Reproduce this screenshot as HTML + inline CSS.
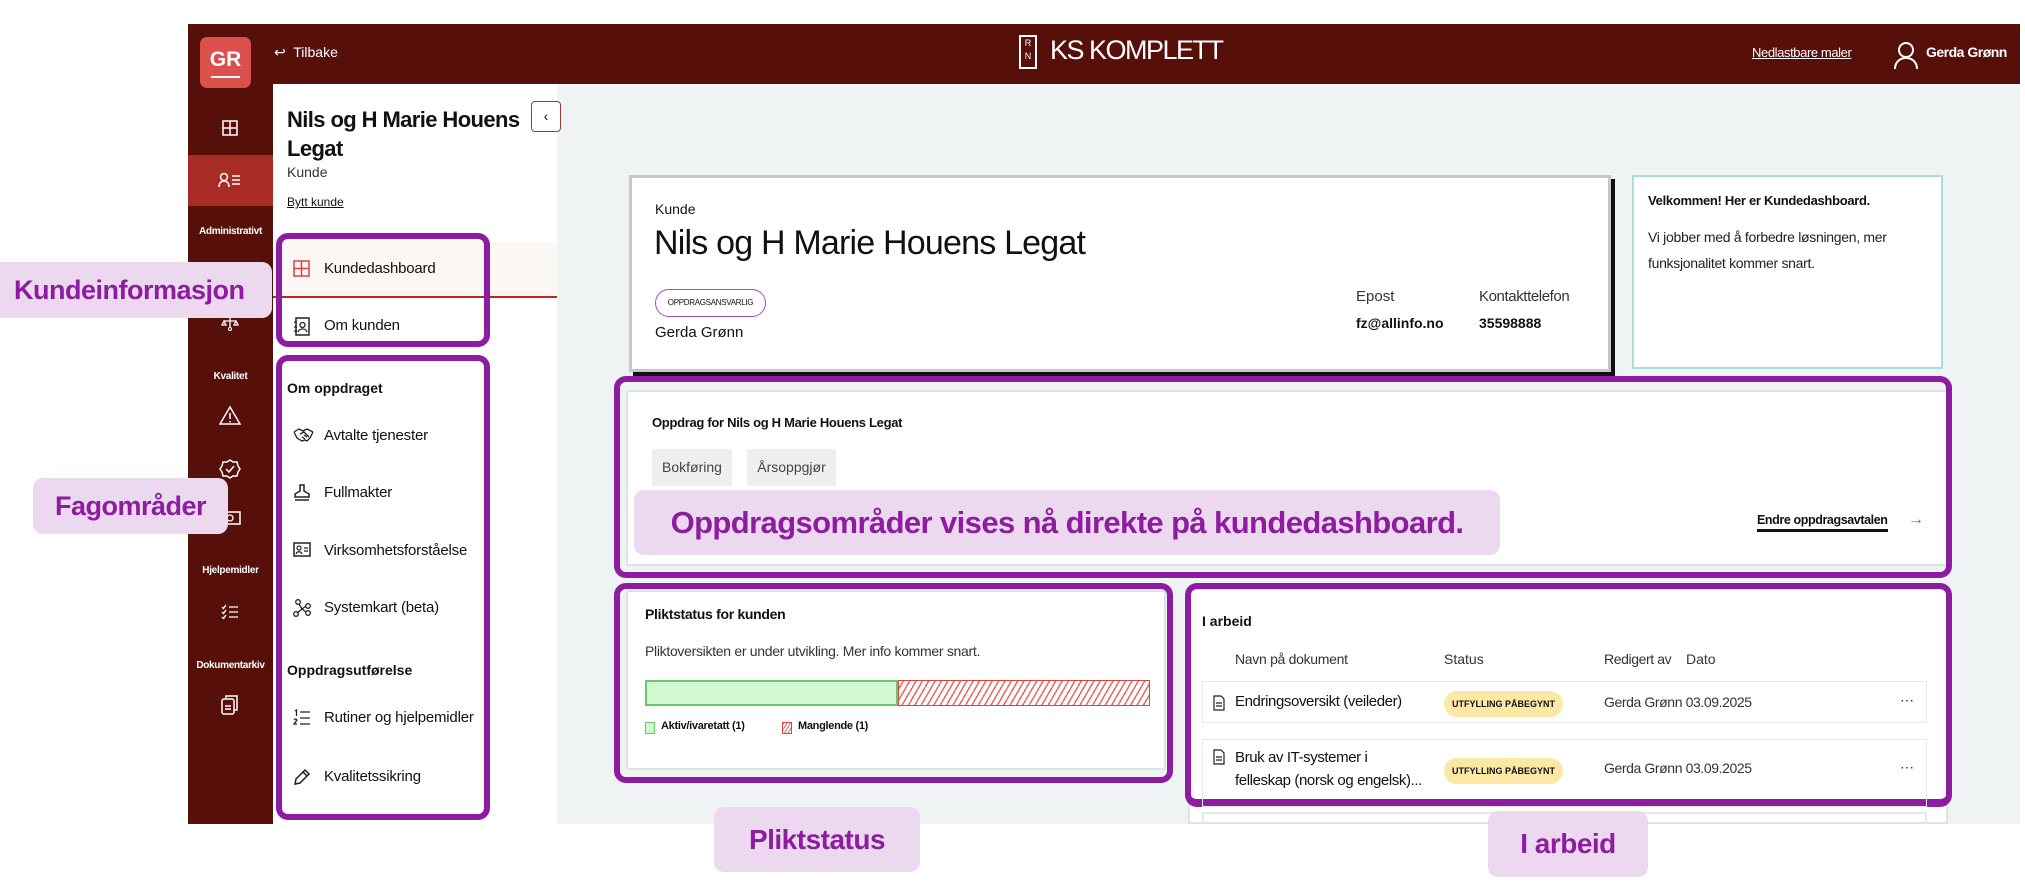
<!DOCTYPE html>
<html><head><meta charset="utf-8">
<style>
*{box-sizing:border-box;margin:0;padding:0}
body{width:2025px;height:888px;background:#fff;position:relative;overflow:hidden;font-family:"Liberation Sans",sans-serif;color:#111}
.a{position:absolute}
.rail{left:188px;top:24px;width:85px;height:800px;background:#560f09}
.top{left:188px;top:24px;width:1832px;height:60px;background:#560f09}
.main{left:557px;top:84px;width:1463px;height:740px;background:#eff3f3}
.panel{left:273px;top:84px;width:284px;height:740px;background:#fff}
.rl{color:#fff;font-size:10px;font-weight:bold;width:85px;text-align:center;left:188px;letter-spacing:-0.3px}
.ri{left:188px;width:85px;text-align:center;color:#fff}
.nav{left:294px;font-size:15px;color:#111;letter-spacing:-0.2px}
.ic{position:absolute;left:-1px;top:0}
.nav span{margin-left:30px}
.pbox{border:6px solid #8d1ca0;border-radius:12px}
.lab{background:#ecd9f0;color:#8d1ca0;font-family:"Liberation Sans",sans-serif;font-weight:bold;border-radius:10px;display:flex;align-items:center;justify-content:center}
.card{background:#fff}
.badge{background:#fbe8a5;border-radius:14px;font-size:9px;font-weight:bold;padding:0 8px;height:26px;line-height:26px}
</style></head><body>
<div class="a top"></div>
<div class="a rail"></div>
<div class="a main"></div>
<div class="a panel"></div>

<div class="a" style="left:200px;top:37px;width:51px;height:51px;background:#db4f4c;border-radius:7px;color:#fff;font-weight:bold;font-size:21px;text-align:center;line-height:46px">GR<div style="position:absolute;left:11px;top:39px;width:29px;height:2px;background:#fff"></div></div>
<div class="a" style="left:274px;top:44px;color:#fff;font-size:14px">&#8617;&nbsp; Tilbake</div>
<div class="a" style="left:1019px;top:35px;width:18px;height:34px;border:2px solid #fff;color:#fff;font-size:9px;text-align:center;line-height:13px">R<br>N</div>
<div class="a" style="left:1050px;top:35px;color:#fff;font-size:27px;letter-spacing:-1.5px;font-weight:300">KS KOMPLETT</div>
<div class="a" style="left:1752px;top:45px;color:#fff;font-size:13px;text-decoration:underline;letter-spacing:-0.4px">Nedlastbare maler</div>
<svg class="a" style="left:1893px;top:40px" width="26" height="30" viewBox="0 0 26 30"><circle cx="13" cy="10" r="7" fill="none" stroke="#fff" stroke-width="2"/><path d="M2 29c0-7 5-11 11-11s11 4 11 11" fill="none" stroke="#fff" stroke-width="2"/></svg>
<div class="a" style="left:1926px;top:44px;color:#fff;font-size:14px;font-weight:bold;letter-spacing:-0.5px">Gerda Grønn</div>

<div class="a" style="left:188px;top:155px;width:85px;height:51px;background:#a92b25"></div>
<svg class="a" style="left:222px;top:120px" width="16" height="16"><rect x="1" y="1" width="14" height="14" fill="none" stroke="#fff" stroke-width="1.5"/><path d="M8 1v14M1 8h14" stroke="#fff" stroke-width="1.5"/></svg>
<svg class="a" style="left:218px;top:172px" width="24" height="16"><circle cx="6" cy="5" r="3.5" fill="none" stroke="#fff" stroke-width="1.5"/><path d="M1 15c0-4 2-6 5-6s5 2 5 6M14 4h8M14 8h8M14 12h8" fill="none" stroke="#fff" stroke-width="1.5"/></svg>
<div class="a rl" style="top:226px">Administrativt</div>
<svg class="a" style="left:221px;top:315px" width="18" height="16"><path d="M9 1v5M3 6h12M3 6l-2 4h4zM15 6l-2 4h4zM9 6v7" fill="none" stroke="#fff" stroke-width="1.3"/><circle cx="9" cy="14" r="1.5" fill="none" stroke="#fff"/></svg>
<div class="a rl" style="top:371px">Kvalitet</div>
<svg class="a" style="left:219px;top:405px" width="22" height="20"><path d="M11 2L1 19h20z" fill="none" stroke="#fff" stroke-width="1.5"/><path d="M11 8v6M11 16v1.5" stroke="#fff" stroke-width="1.5"/></svg>
<svg class="a" style="left:219px;top:458px" width="22" height="22"><path d="M11 2l3 2 4 0 1 4 2 3-2 3-1 4-4 0-3 2-3-2-4 0-1-4-2-3 2-3 1-4 4 0z" fill="none" stroke="#fff" stroke-width="1.5"/><path d="M7 11l3 3 5-6" fill="none" stroke="#fff" stroke-width="1.5"/></svg>
<svg class="a" style="left:219px;top:511px" width="22" height="14"><rect x="1" y="1" width="20" height="12" fill="none" stroke="#fff" stroke-width="1.5"/><circle cx="11" cy="7" r="3" fill="none" stroke="#fff" stroke-width="1.3"/></svg>
<div class="a rl" style="top:565px">Hjelpemidler</div>
<svg class="a" style="left:221px;top:604px" width="18" height="16"><path d="M1 3l1.5 1.5L5 1M1 8l1.5 1.5L5 6M1 13l1.5 1.5L5 11M8 3h9M8 8h9M8 13h9" fill="none" stroke="#fff" stroke-width="1.3"/></svg>
<div class="a rl" style="top:660px">Dokumentarkiv</div>
<svg class="a" style="left:221px;top:694px" width="18" height="22"><rect x="1" y="5" width="12" height="15" rx="2" fill="none" stroke="#fff" stroke-width="1.5"/><path d="M5 4V2h11v14h-3M4 12h6M4 15h6" fill="none" stroke="#fff" stroke-width="1.5"/></svg>

<div class="a" style="left:287px;top:105px;font-size:22px;font-weight:bold;line-height:29px;width:270px;letter-spacing:-0.6px">Nils og H Marie Houens<br>Legat</div>
<div class="a" style="left:287px;top:164px;font-size:14px;color:#333">Kunde</div>
<div class="a" style="left:287px;top:195px;font-size:12px;text-decoration:underline">Bytt kunde</div>
<div class="a" style="left:531px;top:101px;width:30px;height:31px;border:1.5px solid #a03a35;border-radius:4px;background:#fff;text-align:center;line-height:28px;font-size:14px">&#8249;</div>
<div class="a" style="left:273px;top:242px;width:284px;height:56px;background:#fbf7f5;border-bottom:2px solid #c0281f"></div>
<div class="a nav" style="top:260px"><svg class="ic" width="18" height="18"><rect x="1" y="1" width="15" height="15" fill="none" stroke="#d9443f" stroke-width="1.5"/><path d="M8.5 1v15M1 8.5h15" stroke="#d9443f" stroke-width="1.5"/></svg><span>Kundedashboard</span></div>
<div class="a nav" style="top:317px"><svg class="ic" width="18" height="20"><rect x="3" y="1" width="13" height="17" fill="none" stroke="#222" stroke-width="1.5"/><circle cx="9.5" cy="8" r="2.5" fill="none" stroke="#222" stroke-width="1.3"/><path d="M5 15c1-4 8-4 9 0M1 5h3M1 10h3M1 14h3" fill="none" stroke="#222" stroke-width="1.3"/></svg><span>Om kunden</span></div>
<div class="a" style="left:287px;top:380px;font-size:14px;font-weight:bold">Om oppdraget</div>
<div class="a nav" style="top:427px"><svg class="ic" width="22" height="16"><path d="M1 5l5-3 4 2 4-2 6 3M1 5l3 6 5 3 3-1 2 1 3-3 3-6M7 7l4-2 5 5M9 10l3 2M11 8l3 2" fill="none" stroke="#222" stroke-width="1.3"/></svg><span>Avtalte tjenester</span></div>
<div class="a nav" style="top:484px"><svg class="ic" width="18" height="18"><path d="M7 1h4v6l5 3v3H2v-3l5-3z M2 16h14" fill="none" stroke="#222" stroke-width="1.5"/></svg><span>Fullmakter</span></div>
<div class="a nav" style="top:542px"><svg class="ic" width="18" height="16"><rect x="1" y="1" width="16" height="13" fill="none" stroke="#222" stroke-width="1.5"/><circle cx="6" cy="6" r="2" fill="none" stroke="#222" stroke-width="1.2"/><path d="M3 12c1-3 5-3 6 0M11 6h4M11 9h4" fill="none" stroke="#222" stroke-width="1.2"/></svg><span>Virksomhetsforståelse</span></div>
<div class="a nav" style="top:599px"><svg class="ic" width="18" height="18"><circle cx="5" cy="3" r="2.3" fill="none" stroke="#222" stroke-width="1.3"/><circle cx="3" cy="15" r="2.3" fill="none" stroke="#222" stroke-width="1.3"/><circle cx="15" cy="7" r="2.3" fill="none" stroke="#222" stroke-width="1.3"/><circle cx="15" cy="14" r="2.3" fill="none" stroke="#222" stroke-width="1.3"/><path d="M6 5l3 5 4-3M9 10l-5 4M9 10l4 3" fill="none" stroke="#222" stroke-width="1.3"/></svg><span>Systemkart (beta)</span></div>
<div class="a" style="left:287px;top:662px;font-size:14px;font-weight:bold">Oppdragsutførelse</div>
<div class="a nav" style="top:709px"><svg class="ic" width="18" height="18"><path d="M2 2l1.5-1v6M1 11q2-2 3 0l-3 4h3M7 3h10M7 9h10M7 15h10" fill="none" stroke="#222" stroke-width="1.3"/></svg><span>Rutiner og hjelpemidler</span></div>
<div class="a nav" style="top:768px"><svg class="ic" width="18" height="18"><path d="M2 16l1-5 9-9 4 4-9 9z M10 4l4 4" fill="none" stroke="#222" stroke-width="1.5"/></svg><span>Kvalitetssikring</span></div>

<div class="a pbox" style="left:276px;top:233px;width:214px;height:114px"></div>
<div class="a pbox" style="left:276px;top:355px;width:214px;height:465px"></div>
<div class="a lab" style="left:0;top:262px;width:272px;height:56px;border-radius:0 10px 10px 0;font-size:27px;justify-content:flex-start;padding-left:14px;letter-spacing:-0.5px">Kundeinformasjon</div>
<div class="a lab" style="left:33px;top:478px;width:195px;height:56px;font-size:27px;letter-spacing:-0.5px">Fagområder</div>

<div class="a card" style="left:629px;top:175px;width:982px;height:197px;border:3px solid #c8c8c8;box-shadow:4px 4px 0 #111"></div>
<div class="a" style="left:655px;top:201px;font-size:14px">Kunde</div>
<div class="a" style="left:654px;top:224px;font-size:34px;letter-spacing:-0.8px">Nils og H Marie Houens Legat</div>
<div class="a" style="left:655px;top:289px;width:111px;height:28px;border:1.5px solid #a04cc0;border-radius:14px;font-size:8px;text-align:center;line-height:25px;letter-spacing:-0.3px">OPPDRAGSANSVARLIG</div>
<div class="a" style="left:655px;top:324px;font-size:15px">Gerda Grønn</div>
<div class="a" style="left:1356px;top:288px;font-size:15px;color:#333">Epost</div>
<div class="a" style="left:1356px;top:315px;font-size:14px;font-weight:bold">fz@allinfo.no</div>
<div class="a" style="left:1479px;top:288px;font-size:15px;color:#333;letter-spacing:-0.4px">Kontakttelefon</div>
<div class="a" style="left:1479px;top:315px;font-size:14px;font-weight:bold">35598888</div>
<div class="a card" style="left:1632px;top:175px;width:311px;height:194px;border:2px solid #a9dede"></div>
<div class="a" style="left:1648px;top:193px;font-size:13px;font-weight:bold;letter-spacing:-0.3px">Velkommen! Her er Kundedashboard.</div>
<div class="a" style="left:1648px;top:224px;font-size:14px;line-height:26px;width:285px;color:#222;letter-spacing:-0.3px">Vi jobber med å forbedre løsningen, mer funksjonalitet kommer snart.</div>

<div class="a card" style="left:626px;top:390px;width:1322px;height:176px;border:2px solid #dde4e4"></div>
<div class="a pbox" style="left:614px;top:376px;width:1338px;height:202px"></div>
<div class="a" style="left:652px;top:415px;font-size:13px;font-weight:bold;letter-spacing:-0.3px">Oppdrag for Nils og H Marie Houens Legat</div>
<div class="a" style="left:652px;top:449px;width:80px;height:37px;background:#eef0f0;font-size:14px;color:#444;text-align:center;line-height:37px">Bokføring</div>
<div class="a" style="left:747px;top:449px;width:89px;height:37px;background:#eef0f0;font-size:14px;color:#444;text-align:center;line-height:37px">Årsoppgjør</div>
<div class="a lab" style="left:634px;top:490px;width:866px;height:65px;font-size:31px;letter-spacing:-0.6px">Oppdragsområder vises nå direkte på kundedashboard.</div>
<div class="a" style="left:1757px;top:513px;font-size:12.5px;font-weight:bold;border-bottom:3px solid #111;padding-bottom:2px;letter-spacing:-0.4px">Endre oppdragsavtalen</div>
<div class="a" style="left:1908px;top:511px;font-size:16px;color:#d9443f">&#8594;</div>

<div class="a card" style="left:626px;top:590px;width:540px;height:180px;border:2px solid #dde4e4"></div>
<div class="a pbox" style="left:614px;top:583px;width:559px;height:200px"></div>
<div class="a" style="left:645px;top:606px;font-size:14px;font-weight:bold;letter-spacing:-0.3px">Pliktstatus for kunden</div>
<div class="a" style="left:645px;top:643px;font-size:14px;color:#333;letter-spacing:-0.3px">Pliktoversikten er under utvikling. Mer info kommer snart.</div>
<div class="a" style="left:645px;top:680px;width:253px;height:26px;background:#d2f8d2;border:2px solid #6cc46c"></div>
<div class="a" style="left:898px;top:680px;width:252px;height:26px;border:1.5px solid #d9443f;background:repeating-linear-gradient(-60deg,#fff 0 4px,#e56a65 4px 5.5px)"></div>
<div class="a" style="left:645px;top:722px;width:10px;height:12px;background:#d2f8d2;border:1.5px solid #6cc46c"></div>
<div class="a" style="left:661px;top:720px;font-size:11px;font-weight:bold;letter-spacing:-0.3px">Aktiv/ivaretatt (1)</div>
<div class="a" style="left:782px;top:722px;width:10px;height:12px;border:1px solid #d9443f;background:repeating-linear-gradient(-60deg,#fff 0 2px,#e56a65 2px 3px)"></div>
<div class="a" style="left:798px;top:720px;font-size:11px;font-weight:bold;letter-spacing:-0.3px">Manglende (1)</div>

<div class="a card" style="left:1188px;top:588px;width:760px;height:236px;border:2px solid #dde4e4"></div>
<div class="a" style="left:1202px;top:812px;width:725px;height:12px;border:2px solid #e4eaea;border-bottom:none"></div>
<div class="a pbox" style="left:1185px;top:583px;width:767px;height:224px;border-bottom-width:8px"></div>
<div class="a" style="left:1202px;top:613px;font-size:14px;font-weight:bold">I arbeid</div>
<div class="a" style="left:1235px;top:651px;font-size:14px;color:#333;letter-spacing:-0.3px">Navn på dokument</div>
<div class="a" style="left:1444px;top:651px;font-size:14px;color:#333">Status</div>
<div class="a" style="left:1604px;top:651px;font-size:14px;color:#333;letter-spacing:-0.4px">Redigert av</div>
<div class="a" style="left:1686px;top:651px;font-size:14px;color:#333">Dato</div>
<div class="a" style="left:1202px;top:681px;width:725px;height:42px;border:1.5px solid #e4eaea"></div>
<svg class="a" style="left:1213px;top:695px" width="12" height="16"><path d="M1 1h7l3 3v11H1z M3 8h6M3 11h6" fill="none" stroke="#222" stroke-width="1.2"/></svg>
<div class="a" style="left:1235px;top:693px;font-size:15px;letter-spacing:-0.4px">Endringsoversikt (veileder)</div>
<div class="a badge" style="left:1444px;top:691px">UTFYLLING PÅBEGYNT</div>
<div class="a" style="left:1604px;top:694px;font-size:14px;color:#333;letter-spacing:-0.4px">Gerda Grønn 03.09.2025</div>
<div class="a" style="left:1900px;top:692px;font-size:14px;color:#333">&#8943;</div>
<div class="a" style="left:1202px;top:739px;width:725px;height:68px;border:1.5px solid #e4eaea"></div>
<svg class="a" style="left:1213px;top:749px" width="12" height="16"><path d="M1 1h7l3 3v11H1z M3 8h6M3 11h6" fill="none" stroke="#222" stroke-width="1.2"/></svg>
<div class="a" style="left:1235px;top:746px;font-size:15px;line-height:23px;letter-spacing:-0.4px">Bruk av IT-systemer i<br>felleskap (norsk og engelsk)...</div>
<div class="a badge" style="left:1444px;top:758px">UTFYLLING PÅBEGYNT</div>
<div class="a" style="left:1604px;top:760px;font-size:14px;color:#333;letter-spacing:-0.4px">Gerda Grønn 03.09.2025</div>
<div class="a" style="left:1900px;top:759px;font-size:14px;color:#333">&#8943;</div>

<div class="a" style="left:557px;top:824px;width:1468px;height:64px;background:#fff"></div>
<div class="a lab" style="left:714px;top:807px;width:206px;height:65px;font-size:28px;letter-spacing:-0.5px">Pliktstatus</div>
<div class="a lab" style="left:1488px;top:811px;width:160px;height:66px;font-size:28px;letter-spacing:-0.5px">I arbeid</div>
</body></html>
